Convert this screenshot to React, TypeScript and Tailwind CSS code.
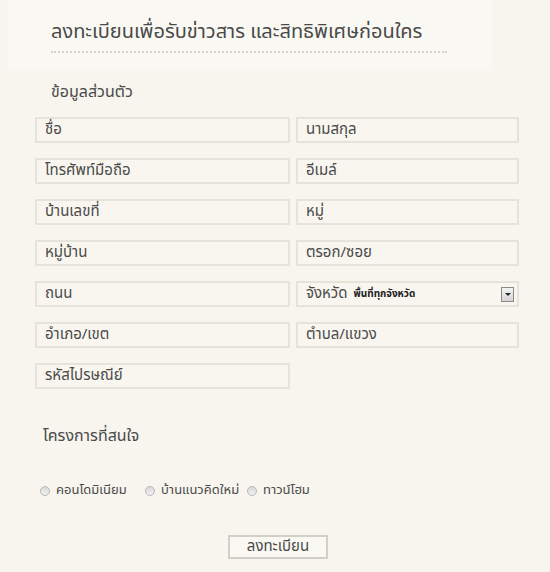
import React from 'react';

const leftFields = ['ชื่อ', 'โทรศัพท์มือถือ', 'บ้านเลขที่', 'หมู่บ้าน', 'ถนน', 'อำเภอ/เขต', 'รหัสไปรษณีย์'];
const rightFields = ['นามสกุล', 'อีเมล์', 'หมู่', 'ตรอก/ซอย', 'จังหวัด', 'ตำบล/แขวง'];

const Field: React.FC<{ label: string; children?: React.ReactNode }> = ({ label, children }) => (
  <div className="h-[26px] border-2 border-[#e6e3da] bg-[#f8f6ef] flex items-center pl-[8px] pr-[3px] text-[15px] text-[#4a4a4a]">
    <span className="whitespace-nowrap">{label}</span>
    {children}
  </div>
);

const Radio: React.FC<{ label: string }> = ({ label }) => (
  <label className="flex items-center gap-[6px] text-[13px] text-[#4a4a4a] whitespace-nowrap">
    <span className="w-[10px] h-[10px] rounded-full border border-[#b9b9b9] bg-gradient-to-b from-[#d8d8d8] to-[#f2f2f2]" />
    {label}
  </label>
);

export default function App() {
  return (
    <div
      className="w-[550px] h-[572px] bg-[#f7f5ee] overflow-hidden"
      style={{ fontFamily: '"Noto Sans Thai", "Noto Sans", sans-serif' }}
    >
      <div className="ml-[8px] w-[484px] pt-[18px] pl-[43px] pb-[18px] bg-[#f9f8f2]">
        <h1 className="text-[20px] leading-[28px] text-[#4a4a4a]">ลงทะเบียนเพื่อรับข่าวสาร และสิทธิพิเศษก่อนใคร</h1>
        <div className="mt-[5px] w-[396px] border-b-2 border-dotted border-[#d2d2d2]" />
      </div>

      <h2 className="ml-[51px] mt-[10px] text-[16px] leading-[22px] text-[#4a4a4a]">ข้อมูลส่วนตัว</h2>

      <div className="ml-[35px] mt-[14px] grid grid-cols-[255px_223px] gap-x-[6px] gap-y-[15px]">
        {leftFields.map((l, i) => (
          <React.Fragment key={l}>
            <Field label={l} />
            {rightFields[i] &&
              (rightFields[i] === 'จังหวัด' ? (
                <Field label={rightFields[i]}>
                  <span className="ml-[6px] text-[10px] font-bold text-[#222] flex-1">พื้นที่ทุกจังหวัด</span>
                  <span className="w-[13px] h-[15px] border border-[#8a8a8a] bg-gradient-to-b from-[#f4f4f4] to-[#d4d4d4] flex items-center justify-center">
                    <span className="w-0 h-0 border-l-[3px] border-r-[3px] border-t-[3px] border-l-transparent border-r-transparent border-t-[#222]" />
                  </span>
                </Field>
              ) : (
                <Field label={rightFields[i]} />
              ))}
          </React.Fragment>
        ))}
      </div>

      <h2 className="ml-[43px] mt-[36px] text-[16px] leading-[22px] text-[#4a4a4a]">โครงการที่สนใจ</h2>

      <div className="ml-[40px] mt-[34px] flex items-center">
        <div className="w-[105px]"><Radio label="คอนโดมิเนียม" /></div>
        <div className="w-[102px]"><Radio label="บ้านแนวคิดใหม่" /></div>
        <Radio label="ทาวน์โฮม" />
      </div>

      <div className="mt-[34px] flex justify-start pl-[228px]">
        <button className="w-[100px] h-[24px] border-2 border-[#d2cfc6] bg-[#f9f8f2] text-[15px] leading-none text-[#4a4a4a]">
          ลงทะเบียน
        </button>
      </div>
    </div>
  );
}
